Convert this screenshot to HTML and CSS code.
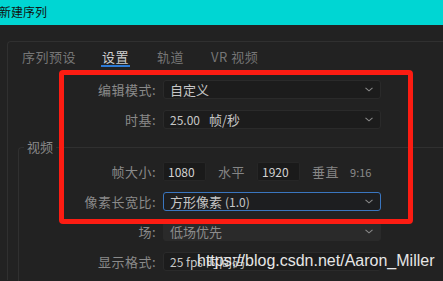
FILE: index.html
```html
<!DOCTYPE html>
<html lang="zh-CN">
<head>
    <meta charset="UTF-8">
    <meta name="viewport" content="width=device-width, initial-scale=1.0">
    <title>新建序列</title>
    <link rel="stylesheet" href="styles.css">
</head>
<body>

    <div class="title-bar">新建序列</div>

    <div class="panel">
        <!-- tab strip -->
        <div class="tabs">
            <span class="tab">序列预设</span>
            <span class="tab active">设置</span>
            <span class="tab">轨道</span>
            <span class="tab">VR 视频</span>
        </div>

        <div class="row">
            <span class="label">编辑模式:</span>
            <div class="select">
                <span>自定义</span>
                <svg class="chevron" width="8" height="5" viewBox="0 0 8 5"><polyline points="0.5,0.8 4,3.8 7.5,0.8" /></svg>
            </div>
        </div>
        <div class="row">
            <span class="label">时基:</span>
            <div class="select">
                <span><span class="num">25.00</span><span class="unit-text">帧/秒</span></span>
                <svg class="chevron" width="8" height="5" viewBox="0 0 8 5"><polyline points="0.5,0.8 4,3.8 7.5,0.8" /></svg>
            </div>
        </div>

        <fieldset class="group">
            <legend>视频</legend>

            <div class="row">
                <span class="label">帧大小:</span>
                <div class="field num">1080</div>
                <span class="unit">水平</span>
                <div class="field num">1920</div>
                <span class="unit">垂直</span>
                <span class="ratio">9:16</span>
            </div>
            <div class="row">
                <span class="label">像素长宽比:</span>
                <div class="select focused">
                    <span>方形像素 <span class="num">(1.0)</span></span>
                    <svg class="chevron" width="8" height="5" viewBox="0 0 8 5"><polyline points="0.5,0.8 4,3.8 7.5,0.8" /></svg>
                </div>
            </div>
            <div class="row">
                <span class="label">场:</span>
                <div class="select disabled">
                    <span>低场优先</span>
                    <svg class="chevron" width="8" height="5" viewBox="0 0 8 5"><polyline points="0.5,0.8 4,3.8 7.5,0.8" /></svg>
                </div>
            </div>
            <div class="row">
                <span class="label">显示格式:</span>
                <div class="select">
                    <span><span class="num">25 fps</span> 时间码</span>
                </div>
            </div>
        </fieldset>
    </div>

    <!-- annotation drawn over the screenshot -->
    <div class="highlight"></div>
    <div class="watermark">https://blog.csdn.net/Aaron_Miller</div>

</body>
</html>
```

FILE: styles.css
```css
body {
    margin: 0;
    height: 100vh;
    background-color: #222222;
    font-family: "Noto Sans CJK SC", "Noto Sans", sans-serif;
    font-size: 13px;
    color: #8a8a8a;
    overflow: hidden;
    position: relative;
}
.title-bar {
    height: 25px;
    line-height: 24px;
    background-color: #00d6d3;
    color: #111;
    font-size: 12px;
    margin-left: -1px;
}
.panel {
    margin: 16px 0 0 7px;
    border: 1px solid #303030;
    border-right: none;
    border-bottom: none;
    border-top-left-radius: 4px;
    height: calc(100vh - 42px);
    box-sizing: border-box;
}
.tabs {
    display: flex;
    gap: 27px;
    padding: 7px 0 0 14px;
}
.tab {
    line-height: 16px;
    letter-spacing: 0.5px;
    color: #767676;
    border-bottom: 2px solid transparent;
}
.tab.active {
    color: #cfcfcf;
    border-bottom-color: #2d7bd6;
    padding: 0 1px;
    margin-left: -2px;
}
.row {
    display: flex;
    align-items: center;
    height: 19px;
    margin-top: 11px;
}
.tabs + .row {
    margin-top: 13px;
}
.label {
    box-sizing: border-box;
    width: 155px;
    padding-right: 7px;
    text-align: right;
    letter-spacing: 0.5px;
    color: #8a8a8a;
}
.select {
    box-sizing: border-box;
    width: 218px;
    height: 19px;
    display: flex;
    align-items: center;
    justify-content: space-between;
    padding: 0 7px 0 6px;
    background-color: #1c1c1c;
    border: 1px solid #2a2a2a;
    border-radius: 3px;
    color: #c6c6c6;
    line-height: 17px;
    white-space: nowrap;
}
.select.focused {
    border-color: #3a76c0;
    background-color: #1d1e20;
}
.select.disabled {
    background-color: #2a2a2a;
    border-color: #2a2a2a;
    color: #8c8c8c;
}
.chevron polyline {
    fill: none;
    stroke: #8a8a8a;
    stroke-width: 1.1;
}
.num {
    font-size: 12px;
}
.unit-text {
    margin-left: 9px;
}
.field {
    box-sizing: border-box;
    width: 43px;
    height: 19px;
    line-height: 17px;
    padding-left: 4px;
    background-color: #1a1a1a;
    border: 1px solid #262626;
    border-radius: 2px;
    color: #d2d2d2;
}
.unit {
    margin: 0 12px;
    letter-spacing: 0.5px;
    color: #858585;
}
.ratio {
    font-size: 11px;
    color: #8a8a8a;
    margin-left: -1px;
}

/* video group */
.group {
    margin: 10px 0 0 10px;
    padding: 7px 0 40px 0;
    min-width: 0;
    border: 1px solid #303030;
    border-right: none;
    border-bottom: none;
    border-top-left-radius: 4px;
}
.group legend {
    margin-left: 5px;
    padding: 0 3px;
    line-height: 16px;
    color: #8a8a8a;
}
.group .label {
    width: 144px;
}
.group .row:first-of-type {
    margin-top: 0;
}

/* red annotation box and blog watermark */
.highlight {
    position: absolute;
    left: 59px;
    top: 70px;
    width: 354px;
    height: 154px;
    box-sizing: border-box;
    border: 5px solid #fc1c12;
    border-radius: 4px;
}
.watermark {
    position: absolute;
    left: 197px;
    top: 252px;
    font-family: "Liberation Sans", Arial, sans-serif;
    font-size: 16px;
    color: #e6e6e6;
    white-space: nowrap;
}
```
